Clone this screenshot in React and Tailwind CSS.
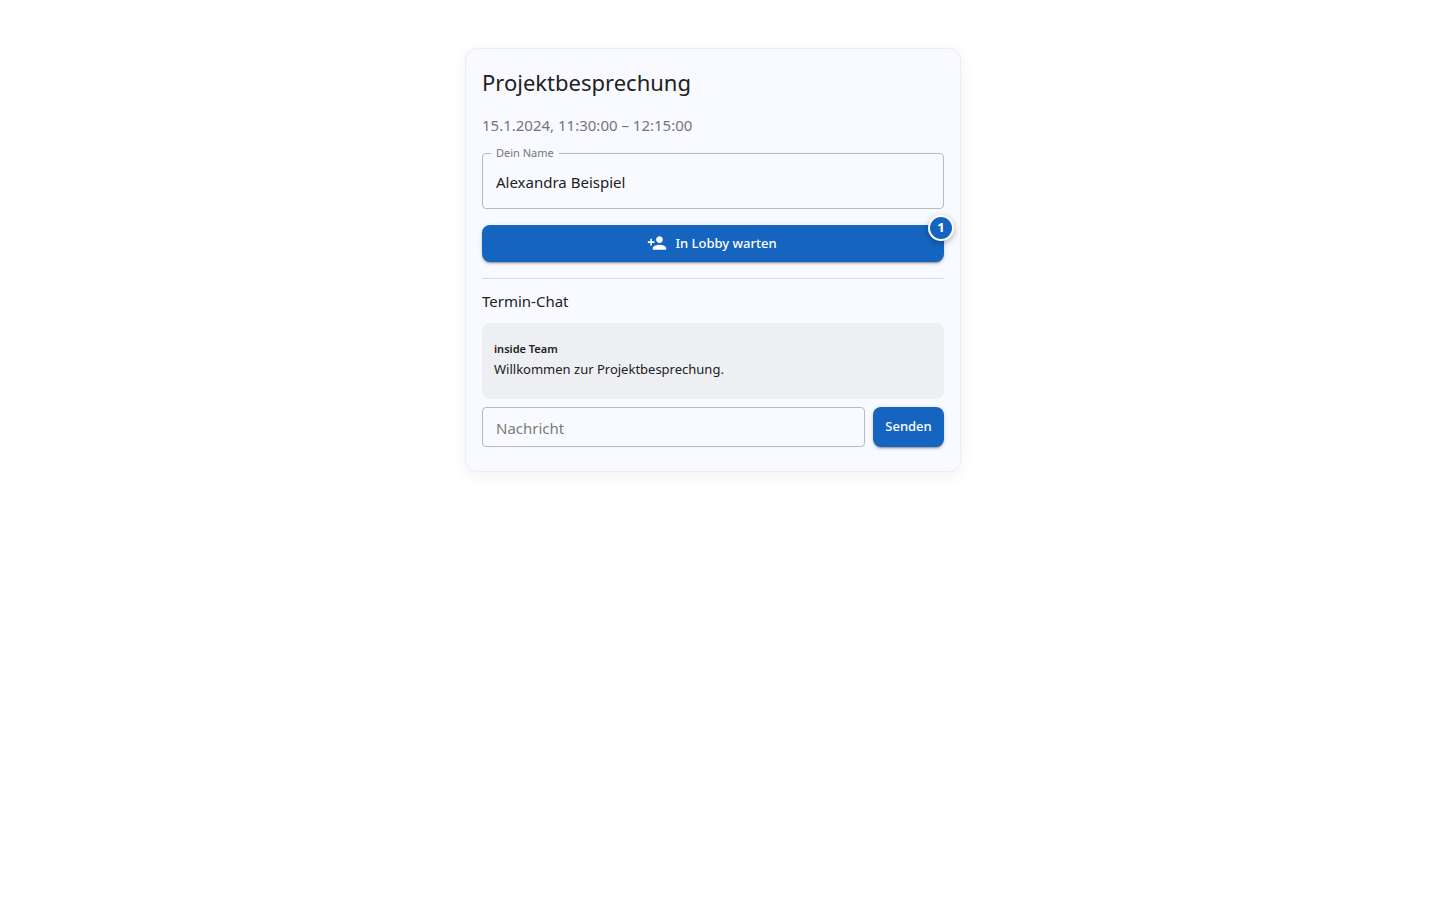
import { useState } from "react";
import { MdPersonAdd } from "react-icons/md";

const messages = [
  { id: 1, author: "inside Team", text: "Willkommen zur Projektbesprechung." },
];

const buttonClass =
  "rounded-lg bg-[#1565c0] text-white font-medium text-[13px] leading-6 pb-0.5 shadow-[0_3px_1px_-2px_rgba(0,0,0,0.2),0_2px_2px_0_rgba(0,0,0,0.14),0_1px_5px_0_rgba(0,0,0,0.12)]";

function NameField() {
  const [name, setName] = useState("Alexandra Beispiel");
  return (
    <div className="relative mt-4">
      <label
        htmlFor="name"
        className="absolute -top-2 left-[9px] bg-[#f9faff] px-[5px] text-[11px] leading-4 text-[#757575]"
      >
        Dein Name
      </label>
      <input
        id="name"
        type="text"
        value={name}
        onChange={(e) => setName(e.target.value)}
        className="block h-14 w-full rounded border border-[#b9bac0] bg-transparent px-[13px] pt-0.5 text-[15px] text-[#212121] outline-none"
      />
    </div>
  );
}

function LobbyButton() {
  return (
    <div className="relative mt-4">
      <button
        type="button"
        className={`${buttonClass} flex h-[37px] w-full items-center justify-center gap-2 pr-0.5`}
      >
        <MdPersonAdd className="size-5" aria-hidden="true" />
        In Lobby warten
      </button>
      <span className="absolute -top-2.5 -right-2.5 flex size-[26px] items-center justify-center rounded-full border-2 border-white bg-[#1565c0] text-[13px] font-bold text-white shadow-[0_2px_6px_rgba(0,0,0,0.3)]">
        1
      </span>
    </div>
  );
}

function Chat() {
  const [draft, setDraft] = useState("");
  return (
    <section className="mt-4 border-t border-[#d8d9de] pt-2.5">
      <h2 className="text-[15px] leading-6 text-[#212121]">Termin-Chat</h2>
      <ul className="mt-2.5 rounded-lg bg-[#eeeff3] px-3 pt-4 pb-5">
        {messages.map((m) => (
          <li key={m.id} className="text-[#212121]">
            <p className="text-[11px] leading-5 font-semibold">{m.author}</p>
            <p className="text-[13px] leading-5">{m.text}</p>
          </li>
        ))}
      </ul>
      <form className="mt-2 flex gap-2" onSubmit={(e) => e.preventDefault()}>
        <input
          type="text"
          aria-label="Nachricht"
          placeholder="Nachricht"
          value={draft}
          onChange={(e) => setDraft(e.target.value)}
          className="h-10 min-w-0 flex-1 rounded border border-[#b9bac0] bg-transparent px-[13px] pt-0.5 text-[15px] text-[#212121] outline-none placeholder:text-[#7a7a7a]"
        />
        <button type="submit" className={`${buttonClass} h-10 min-w-[71px] px-3`}>
          Senden
        </button>
      </form>
    </section>
  );
}

export default function App() {
  return (
    <div className="bg-white py-12 pr-[30px] pl-4 font-['Noto_Sans','Open_Sans',sans-serif]">
      <main className="mx-auto max-w-[496px] rounded-xl border border-[#ececf1] bg-[#f9faff] px-4 pt-[17px] pb-6 shadow-[0_4px_16px_rgba(0,0,0,0.06)]">
        <h1 className="text-[22px] leading-8 text-[#212121]">
          Projektbesprechung
        </h1>
        <p className="mt-[15px] text-[15px] leading-6 text-[#757575]">
          15.1.2024, 11:30:00 – 12:15:00
        </p>
        <NameField />
        <LobbyButton />
        <Chat />
      </main>
    </div>
  );
}
